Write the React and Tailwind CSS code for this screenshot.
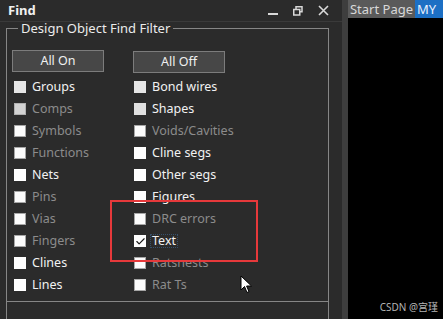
import { Check } from 'lucide-react';

const dim = 'bg-[#fbfbfb] border border-[#a6a6a6]';

const left = [
  { label: 'Groups', on: true, box: 'bg-[#e6e6e6]' },
  { label: 'Comps', on: false, box: 'bg-[#d2d2d2] border border-[#b0b0b0]' },
  { label: 'Symbols', on: false, box: dim },
  { label: 'Functions', on: false, box: dim },
  { label: 'Nets', on: true, box: 'bg-white' },
  { label: 'Pins', on: false, box: dim },
  { label: 'Vias', on: false, box: dim },
  { label: 'Fingers', on: false, box: dim },
  { label: 'Clines', on: true, box: 'bg-white' },
  { label: 'Lines', on: true, box: 'bg-white' },
];

const right = [
  { label: 'Bond wires', on: true, box: 'bg-[#e6e6e6]' },
  { label: 'Shapes', on: true, box: 'bg-[#e0e0e0]' },
  { label: 'Voids/Cavities', on: false, box: dim },
  { label: 'Cline segs', on: true, box: 'bg-white' },
  { label: 'Other segs', on: true, box: 'bg-white' },
  { label: 'Figures', on: true, box: 'bg-white' },
  { label: 'DRC errors', on: false, box: dim },
  { label: 'Text', on: true, box: 'bg-white', checked: true },
  { label: 'Ratsnests', on: false, box: dim },
  { label: 'Rat Ts', on: false, box: dim },
];

function Row({ item }) {
  return (
    <div className="h-[22px] flex items-center">
      <div className={`w-[12px] h-[12px] shrink-0 flex items-center justify-center ${item.box}`}>
        {item.checked && <Check className="w-[11px] h-[11px] text-[#1a1a1a]" strokeWidth={2.5} />}
      </div>
      <span
        className={`${item.checked ? 'outline-1 outline-dotted outline-[#35506b] px-[1px] ml-[5px]' : 'ml-[6px]'} ${item.on ? 'text-[#f2f2f2]' : 'text-[#8c8c8c]'}`}
      >
        {item.label}
      </span>
    </div>
  );
}

function Button({ children }) {
  return (
    <div className="w-[92px] h-[22px] bg-[#474747] border border-[#7c7c7c] text-[#f0f0f0] flex items-center justify-center">
      {children}
    </div>
  );
}

export default function App() {
  return (
    <div className="w-[443px] h-[319px] flex bg-black overflow-hidden relative text-[12.5px] font-['Noto_Sans','Liberation_Sans','Noto_Sans_CJK_SC',sans-serif] leading-none">
      <div className="w-[342px] bg-[#2b2b2b] flex flex-col">
        <div className="h-[22px] border-b border-[#3a3a3a] flex items-center pl-[8px] pr-[13px]">
          <span className="font-bold text-[13px] text-[#f0f0f0]">Find</span>
          <div className="ml-auto flex items-center gap-[15px] text-[#d8d8d8]">
            <svg width="10" height="10" viewBox="0 0 10 10">
              <rect x="0" y="7" width="10" height="2" fill="currentColor" />
            </svg>
            <svg width="10" height="10" viewBox="0 0 10 10" fill="none" stroke="currentColor" strokeWidth="1.5">
              <rect x="3" y="0.75" width="6" height="5" />
              <rect x="0.75" y="3.5" width="6" height="5.5" fill="#2b2b2b" />
            </svg>
            <svg width="11" height="11" viewBox="0 0 11 11" stroke="currentColor" strokeWidth="1.6">
              <path d="M1 1 L10 10 M10 1 L1 10" />
            </svg>
          </div>
        </div>
        <div className="pl-[6px] pr-[13px] flex-1 flex flex-col">
          <fieldset className="border border-[#868686] h-[280px] px-[5px]">
            <legend className="ml-[6px] px-[3px] text-[#ececec] text-[13px]">Design Object Find Filter</legend>
            <div className="flex mt-[15px]">
              <div className="w-[121px]">
                <Button>All On</Button>
                <div className="mt-[4px] pl-[2px]">
                  {left.map((item) => (
                    <Row key={item.label} item={item} />
                  ))}
                </div>
              </div>
              <div>
                <div className="mt-[1px]">
                  <Button>All Off</Button>
                </div>
                <div className="mt-[3px] pl-[1px]">
                  {right.map((item) => (
                    <Row key={item.label} item={item} />
                  ))}
                </div>
              </div>
            </div>
          </fieldset>
          <div className="flex-1 border-x border-[#868686]" />
        </div>
      </div>
      <div className="w-[6px] bg-[#3e3e3e]" />
      <div className="flex-1 flex flex-col">
        <div className="h-[18px] flex text-[13px]">
          <div className="w-[67px] bg-[#5a5a5a] text-[#d8d8d8] flex items-center justify-center">Start Page</div>
          <div className="flex-1 bg-[#1c6fc4] text-[#e8f0ff] flex items-center pl-[2px]">MY</div>
        </div>
      </div>

      <div className="absolute left-[110px] top-[200px] w-[148px] h-[62px] border-2 border-[#e6393b]" />

      <svg className="absolute left-[240px] top-[275px]" width="13" height="19" viewBox="0 0 13 19">
        <path d="M1 1 L1 15 L4.5 11.5 L7 17.5 L9 16.6 L6.6 11 L11.5 11 Z" fill="#ffffff" stroke="#000000" strokeWidth="1" strokeLinejoin="round" />
      </svg>

      <div className="absolute right-[5px] bottom-[7px] text-[10px] text-[#b4b4b4]">CSDN @宫瑾</div>
    </div>
  );
}
